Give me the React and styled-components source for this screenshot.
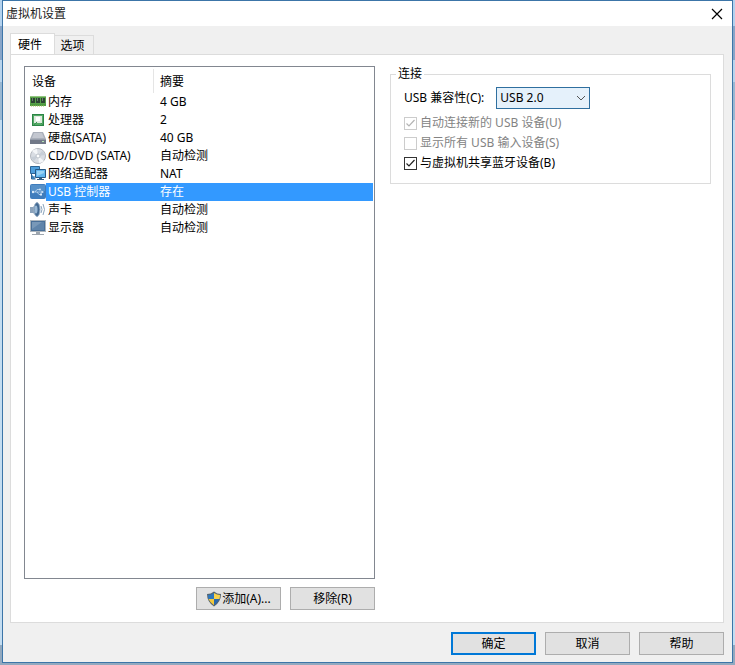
import { useState } from "react";
import styled, { createGlobalStyle } from "styled-components";

const GlobalStyle = createGlobalStyle`
  * {
    box-sizing: border-box;
  }
  body {
    margin: 0;
    font-family: "Noto Sans", "Noto Sans CJK SC", sans-serif;
    font-size: 12px;
    line-height: 18px;
    color: #000;
  }
  button, select, input {
    font: inherit;
    color: inherit;
    margin: 0;
  }
`;

const Desktop = styled.div`
  display: flex;
  height: 100vh;
  padding: 0 2px 2px;
  background: linear-gradient(#b4d2ee 0 26px, #88a5c8 26px 60px, #b9d4ec 60px 82px, #9ab8d2 82px 120px, #c4ddf1 120px 97%, #92a9bf 97%);
`;

const Dialog = styled.div`
  flex: 1;
  display: flex;
  flex-direction: column;
  border: 1px solid #3c75a8;
  background: #f0f0f0;
`;

const TitleBar = styled.header`
  display: flex;
  align-items: center;
  justify-content: space-between;
  height: 25px;
  padding: 0 9px 0 3px;
  background: #fff;
`;

const Title = styled.h1`
  margin: 0;
  font-size: 12px;
  font-weight: 400;
  color: #222;
`;

const CloseButton = styled.button`
  display: flex;
  padding: 0;
  border: 0;
  background: none;
`;

const Body = styled.main`
  flex: 1;
  display: flex;
  flex-direction: column;
  padding: 7px 8px 0 7px;
`;

const TabList = styled.div`
  display: flex;
  align-items: flex-end;
  height: 21px;
`;

const Tab = styled.button`
  height: ${(props) => (props.$active ? "22px" : "19px")};
  width: ${(props) => (props.$active ? "45px" : "39px")};
  margin-bottom: ${(props) => (props.$active ? "-1px" : "0")};
  padding: 0 0 0 1px;
  line-height: 20px;
  text-align: ${(props) => (props.$active ? "left" : "center")};
  text-indent: ${(props) => (props.$active ? "6px" : "-4px")};
  border: 1px solid #dcdcdc;
  border-bottom: 0;
  border-left-width: ${(props) => (props.$active ? "1px" : "0")};
  background: ${(props) => (props.$active ? "#fff" : "#f0f0f0")};
`;

const Panel = styled.section`
  flex: 1;
  display: flex;
  gap: 15px;
  padding: 11px 12px 12px 13px;
  border: 1px solid #dcdcdc;
  background: #fff;
`;

const DeviceColumn = styled.div`
  flex: 0 0 351px;
  display: flex;
  flex-direction: column;
  gap: 8px;
`;

const DeviceList = styled.div`
  flex: 1;
  padding: 2px 1px;
  border: 1px solid #828790;
`;

const DeviceTable = styled.table`
  width: 100%;
  table-layout: fixed;
  border-collapse: collapse;
`;

const HeadCell = styled.th`
  width: ${(props) => props.$width};
  height: 24px;
  padding: 2px 6px 0;
  text-align: left;
  font-weight: 400;
  background: ${(props) =>
    props.$divided ? "linear-gradient(#e5e5e5, #e5e5e5) right / 1px 100% no-repeat" : "none"};
`;

const Row = styled.tr`
  height: 18px;
  cursor: default;
  color: ${(props) => (props.$selected ? "#fff" : "#000")};
`;

const NameCell = styled.td`
  padding: 0 0 0 4px;
`;

const Name = styled.div`
  display: flex;
  align-items: center;
  height: 18px;
`;

const Label = styled.span`
  flex: 1;
  padding-left: 2px;
  white-space: nowrap;
  background: ${(props) => (props.$selected ? "#3399ff" : "none")};
`;

const SummaryCell = styled.td`
  padding: 0 6px;
  background: ${(props) => (props.$selected ? "#3399ff" : "none")};
`;

const Actions = styled.div`
  display: flex;
  justify-content: flex-end;
  gap: 9px;
`;

const Button = styled.button`
  display: flex;
  align-items: center;
  justify-content: center;
  width: 85px;
  height: 23px;
  padding: 1px 0 0;
  border: ${(props) => (props.$primary ? "2px solid #0078d7" : "1px solid #adadad")};
  background: #e1e1e1;
`;

const Settings = styled.div`
  flex: 1;
`;

const Group = styled.fieldset`
  margin: 0;
  padding: 5px 13px 10px;
  border: 1px solid #dcdcdc;
  min-width: 0;
`;

const Legend = styled.legend`
  margin-left: -8px;
  padding: 0 2px;
  line-height: 16px;
`;

const Field = styled.div`
  display: flex;
  align-items: center;
  gap: 12px;
  margin-bottom: 4px;
`;

const SelectBox = styled.div`
  display: grid;
  align-items: center;
  width: 94px;

  & > * {
    grid-area: 1 / 1;
  }
  svg {
    justify-self: end;
    margin-right: 4px;
    pointer-events: none;
  }
`;

const Select = styled.select`
  appearance: none;
  height: 22px;
  padding: 0 3px;
  border: 1px solid #2f6f9f;
  border-radius: 0;
  background: #e5f1fb;
  outline: none;
`;

const CheckLabel = styled.label`
  display: flex;
  align-items: center;
  gap: 3px;
  height: 20px;
  color: ${(props) => (props.$disabled ? "#838383" : "#000")};
`;

const CheckBox = styled.input`
  appearance: none;
  width: 13px;
  height: 13px;
  border: 1px solid #333;
  background: #fff;

  &:disabled {
    border-color: #ccc;
  }
  &:checked {
    background: url("data:image/svg+xml,%3Csvg xmlns='http://www.w3.org/2000/svg' viewBox='0 0 11 11'%3E%3Cpath d='M1.5 5.5l2.5 2.5 5.5-6' fill='none' stroke='%23222' stroke-width='1.2'/%3E%3C/svg%3E") center / 11px no-repeat;
  }
  &:checked:disabled {
    background-image: url("data:image/svg+xml,%3Csvg xmlns='http://www.w3.org/2000/svg' viewBox='0 0 11 11'%3E%3Cpath d='M1.5 5.5l2.5 2.5 5.5-6' fill='none' stroke='%23b4b4b4' stroke-width='1.2'/%3E%3C/svg%3E");
  }
`;

const Footer = styled.footer`
  display: flex;
  justify-content: flex-end;
  gap: 9px;
  padding: 9px 8px 7px;
`;

const Icon = ({ children }) => (
  <svg width="16" height="16" viewBox="0 0 16 16" aria-hidden="true">
    {children}
  </svg>
);

const MemoryIcon = () => (
  <Icon>
    <path d="M0 2h16v10H0z" fill="#57a048" />
    <path d="M0 2h16v1H0z" fill="#93c681" />
    <path d="M1 4h4v5H1zM6 4h4v5H6zM11 4h4v5h-4z" fill="#2c4434" />
    <path d="M2 4h1v3H2zM7 4h1v3H7zM12 4h1v3h-1z" fill="#65816a" />
    <path d="M0 10h16v2H0z" fill="#4c9a41" />
    <path d="M1 12h14" stroke="#a5bb5c" strokeDasharray="1 1" />
  </Icon>
);

const CpuIcon = () => (
  <Icon>
    <path d="M2 2h12v12H2z" fill="#2b8546" />
    <path d="M3 3h10v10H3z" fill="#55aa67" />
    <path d="M4 4h8v7H4z" fill="#dfeadf" />
    <path d="M6 5h4v4H6z" fill="#fff" />
    <path d="M4 13l3-3M11 11l2 2" stroke="#3b9252" />
  </Icon>
);

const DiskIcon = () => (
  <Icon>
    <path d="M3 2h10l3 7H0z" fill="#a9afba" />
    <path d="M4 3h8l2 5H2z" fill="#c3c7d0" />
    <path d="M0 9h16v5H0z" fill="#727988" />
    <path d="M0 9h16v1H0z" fill="#969daa" />
    <path d="M12 11h2v1h-2z" fill="#b7e5b2" />
  </Icon>
);

const DiscIcon = () => (
  <Icon>
    <circle cx="8" cy="8" r="7.500" fill="#d9dde3" stroke="#b4b8bf" />
    <path d="M8 8L2 3a8 8 0 0 1 5-2zM8 8l6 5a8 8 0 0 1-5 2z" fill="#f4f6f8" />
    <path d="M8 8L1 9a7 7 0 0 0 3 4zM8 8l7-1a7 7 0 0 0-3-4z" fill="#c7ced7" />
    <circle cx="8" cy="8" r="2" fill="#fff" stroke="#bcc2ca" />
  </Icon>
);

const NetworkIcon = () => (
  <Icon>
    <path d="M0.500 0.500h9v7h-9zM2 11h3M1.500 8v5h4" fill="#4f9fdc" stroke="#2d6595" />
    <path d="M5.500 3.500h10v8h-10z" fill="#62b5ee" stroke="#265985" />
    <path d="M7 5h7v2l-7 3z" fill="#98d3f5" />
    <path d="M9 12h3v1h2v1H7v-1h2z" fill="#315d83" />
  </Icon>
);

const UsbIcon = () => (
  <Icon>
    <rect y="0" width="16" height="15" rx="2" fill="#3f7dbd" />
    <path d="M1 1h14v6H1z" fill="#5690c8" />
    <path d="M3 8h9M5 8l2-2.500h3M7 8l2 2.500h2" fill="none" stroke="#c4dcf1" strokeWidth="0.8" />
    <path d="M11.500 6.500l2.500 1.500-2.500 1.500z" fill="#d9eafa" />
    <circle cx="3" cy="8" r="1.200" fill="#d9eafa" />
    <circle cx="10" cy="5.500" r="0.900" fill="#d9eafa" />
    <path d="M10 9.500h2v2h-2z" fill="#d9eafa" />
  </Icon>
);

const SoundIcon = () => (
  <Icon>
    <path d="M0 5h3l5-5v15l-5-4H0z" fill="#8ba2ba" />
    <ellipse cx="7" cy="7.500" rx="3" ry="7" fill="#426992" stroke="#9db2c8" />
    <ellipse cx="6" cy="7.500" rx="1.500" ry="4" fill="#9ab9d6" />
    <path d="M11 4q2 3.500 0 7M13 2q3 5.500 0 11" fill="none" stroke="#8ba5be" />
  </Icon>
);

const DisplayIcon = () => (
  <Icon>
    <path d="M0 0h16v12H0z" fill="#acb5bd" />
    <path d="M1 1h14v10H1z" fill="#496f98" />
    <path d="M2 2h12v8H2z" fill="#5f84aa" />
    <path d="M2 2h10L2 9z" fill="#7898b8" />
    <path d="M6 12h4v2h4v1H2v-1h4z" fill="#9da5ae" />
  </Icon>
);

const ShieldIcon = () => (
  <Icon>
    <path d="M8 0.500Q11 3 15 3q0 8-7 12.500Q1 11 1 3q4 0 7-2.500z" fill="#55636c" />
    <path d="M8 2v6H2.500Q2 6 2 4q3 0 6-2z" fill="#2f77bd" />
    <path d="M8 2q3 2 6 2 0 2-.5 4H8z" fill="#f8d24b" />
    <path d="M2.500 8H8v6.200Q4 11.500 2.500 8z" fill="#f3c83b" />
    <path d="M8 8h5.500Q12 11.500 8 14.200z" fill="#2867ad" />
  </Icon>
);

const devices = [
  { name: "内存", summary: "4 GB", icon: MemoryIcon },
  { name: "处理器", summary: "2", icon: CpuIcon },
  { name: "硬盘(SATA)", summary: "40 GB", icon: DiskIcon },
  { name: "CD/DVD (SATA)", summary: "自动检测", icon: DiscIcon },
  { name: "网络适配器", summary: "NAT", icon: NetworkIcon },
  { name: "USB 控制器", summary: "存在", icon: UsbIcon },
  { name: "声卡", summary: "自动检测", icon: SoundIcon },
  { name: "显示器", summary: "自动检测", icon: DisplayIcon },
];

const App = () => {
  const [selected, setSelected] = useState(5);

  return (
    <>
      <GlobalStyle />
      <Desktop>
        <Dialog role="dialog" aria-labelledby="title">
          <TitleBar>
            <Title id="title">虚拟机设置</Title>
            <CloseButton aria-label="关闭">
              <svg width="12" height="12" viewBox="0 0 12 12">
                <path d="M1 1l10 10M11 1L1 11" stroke="#000" strokeWidth="1.2" />
              </svg>
            </CloseButton>
          </TitleBar>
          <Body>
            <TabList role="tablist">
              <Tab role="tab" aria-selected="true" $active>硬件</Tab>
              <Tab role="tab" aria-selected="false">选项</Tab>
            </TabList>
            <Panel>
              <DeviceColumn>
                <DeviceList>
                  <DeviceTable>
                    <thead>
                      <tr>
                        <HeadCell $width="128px" $divided>设备</HeadCell>
                        <HeadCell>摘要</HeadCell>
                      </tr>
                    </thead>
                    <tbody>
                      {devices.map(({ name, summary, icon: DeviceIcon }, i) => (
                        <Row key={name} $selected={i === selected} onClick={() => setSelected(i)}>
                          <NameCell>
                            <Name>
                              <DeviceIcon />
                              <Label $selected={i === selected}>{name}</Label>
                            </Name>
                          </NameCell>
                          <SummaryCell $selected={i === selected}>{summary}</SummaryCell>
                        </Row>
                      ))}
                    </tbody>
                  </DeviceTable>
                </DeviceList>
                <Actions>
                  <Button>
                    <ShieldIcon />
                    添加(A)...
                  </Button>
                  <Button>移除(R)</Button>
                </Actions>
              </DeviceColumn>
              <Settings>
                <Group>
                  <Legend>连接</Legend>
                  <Field>
                    <label htmlFor="compat">USB 兼容性(C):</label>
                    <SelectBox>
                      <Select id="compat" defaultValue="2.0">
                        <option value="1.1">USB 1.1</option>
                        <option value="2.0">USB 2.0</option>
                        <option value="3.0">USB 3.0</option>
                      </Select>
                      <svg width="10" height="6" viewBox="0 0 10 6">
                        <path d="M1 1l4 4 4-4" fill="none" stroke="#555" />
                      </svg>
                    </SelectBox>
                  </Field>
                  <CheckLabel $disabled>
                    <CheckBox type="checkbox" defaultChecked disabled />
                    自动连接新的 USB 设备(U)
                  </CheckLabel>
                  <CheckLabel $disabled>
                    <CheckBox type="checkbox" disabled />
                    显示所有 USB 输入设备(S)
                  </CheckLabel>
                  <CheckLabel>
                    <CheckBox type="checkbox" defaultChecked />
                    与虚拟机共享蓝牙设备(B)
                  </CheckLabel>
                </Group>
              </Settings>
            </Panel>
          </Body>
          <Footer>
            <Button $primary>确定</Button>
            <Button>取消</Button>
            <Button>帮助</Button>
          </Footer>
        </Dialog>
      </Desktop>
    </>
  );
};

export default App;
